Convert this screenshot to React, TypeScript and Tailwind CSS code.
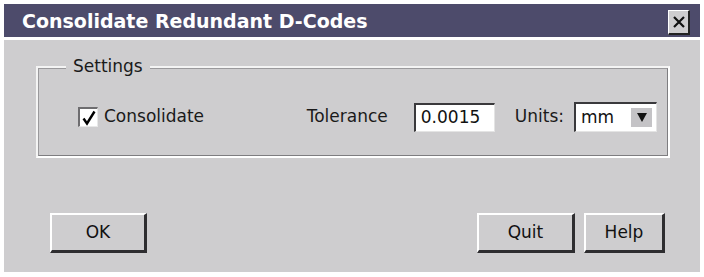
import React from "react"

const font = "font-['DejaVu_Sans',sans-serif]"

function RaisedButton({ label, width }: { label: string; width: string }) {
  return (
    <button
      className={`${width} h-[40px] bg-[#cecdcf] border-t-2 border-l-2 border-t-white border-l-white border-b-[3px] border-r-[3px] border-b-[#2e2d30] border-r-[#2e2d30] text-[17px] text-[#111] ${font}`}
    >
      {label}
    </button>
  )
}

export default function App() {
  return (
    <div className={`w-[704px] h-[277px] bg-white pt-[4px] px-[4px] flex flex-col gap-[3px] ${font}`}>
      {/* title bar */}
      <div className="h-[33px] bg-[#4d4b6b] flex items-center pl-[18px] pr-[10px]">
        <span className="text-white font-bold text-[19px] pt-[1px]">Consolidate Redundant D-Codes</span>
        <div className="ml-auto w-[22px] h-[25px] mt-[4px] bg-[#cecdcf] border-t border-l border-t-white border-l-white border-b-2 border-r-2 border-b-[#222] border-r-[#222] flex items-center justify-center">
          <svg width="12" height="12" viewBox="0 0 12 12">
            <path d="M1 1 L11 11 M11 1 L1 11" stroke="#111" strokeWidth="2.2" />
          </svg>
        </div>
      </div>

      {/* body */}
      <div className="h-[232px] bg-[#cecdcf] pt-[26px] pl-[32px] pr-[30px] flex flex-col">
        <div className="relative h-[92px] border-2 border-t-[#f4f4f4] border-l-[#f4f4f4] border-b-white border-r-white">
          <div className="h-full border border-t-[#9a999c] border-l-[#9a999c] border-b-[#7e7d80] border-r-[#7e7d80] pt-[33px] pl-[39px] pr-[10px]">
            <div className="flex items-center h-[30px]">
              <div className="w-[20px] h-[20px] bg-white border-t-2 border-l-2 border-t-[#6e6d70] border-l-[#6e6d70] border-b border-r border-b-[#e8e8e8] border-r-[#e8e8e8] flex items-center justify-center">
                <svg width="16" height="16" viewBox="0 0 16 16">
                  <path d="M2.5 8.5 L6 13.5 L13.5 1.5" stroke="#000" strokeWidth="2.4" fill="none" strokeLinejoin="miter" />
                </svg>
              </div>
              <span className="ml-[6px] text-[17px] text-[#1a1a1a]">Consolidate</span>

              <span className="ml-auto text-[17px] text-[#1a1a1a]">Tolerance</span>
              <div className="ml-[26px] w-[81px] h-[29px] bg-white border-t-2 border-l-2 border-t-[#3a393c] border-l-[#3a393c] border-b border-r border-b-[#e4e4e4] border-r-[#e4e4e4] flex items-center pl-[5px] text-[17px] text-[#111]">
                0.0015
              </div>
              <span className="ml-[20px] text-[17px] text-[#1a1a1a]">Units:</span>
              <div className="ml-[10px] w-[83px] h-[30px] bg-white border-t-2 border-l-2 border-t-[#3a393c] border-l-[#3a393c] border-b border-r border-b-[#e4e4e4] border-r-[#e4e4e4] flex items-center pl-[5px] pr-[4px] text-[17px] text-[#111]">
                mm
                <div className="ml-auto w-[21px] h-[19px] bg-[#c4c3c6] flex items-center justify-center">
                  <svg width="10" height="9" viewBox="0 0 10 9">
                    <polygon points="0,0 10,0 5,9" fill="#111" />
                  </svg>
                </div>
              </div>
            </div>
          </div>
          <span className="absolute left-[28px] top-[-12px] px-[7px] bg-[#cecdcf] text-[17px] leading-[20px] text-[#1a1a1a]">
            Settings
          </span>
        </div>

        <div className="mt-[55px] flex items-center pl-[14px] pr-[5px]">
          <RaisedButton label="OK" width="w-[97px]" />
          <div className="ml-auto flex gap-[9px]">
            <RaisedButton label="Quit" width="w-[98px]" />
            <RaisedButton label="Help" width="w-[81px]" />
          </div>
        </div>
      </div>
    </div>
  )
}
